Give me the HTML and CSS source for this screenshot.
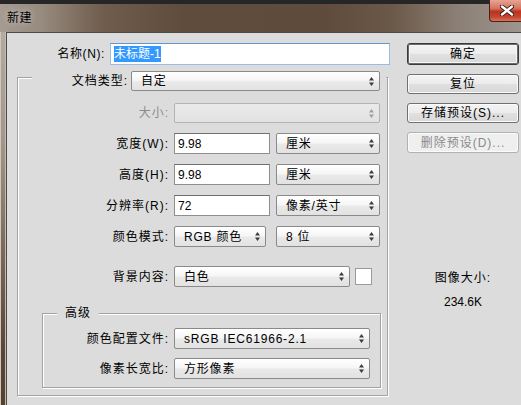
FILE: index.html
```html
<!DOCTYPE html>
<html lang="zh">
<head>
<meta charset="utf-8">
<title>新建</title>
<link rel="stylesheet" href="styles.css">
</head>
<body>
<div class="window">
  <div class="titlebar">
    <span class="title">新建</span>
    <div class="close">
      <svg width="14" height="11" viewBox="0 0 14 11"><path d="M2 1.5 L12 9.5 M12 1.5 L2 9.5" stroke="#3a1a14" stroke-width="4.2" stroke-linecap="round"/><path d="M2 1.5 L12 9.5 M12 1.5 L2 9.5" stroke="#fff" stroke-width="2.4" stroke-linecap="round"/></svg>
    </div>
  </div>
  <div class="frame">
    <div class="frame-left"></div>
    <div class="client">
      <div class="main">
        <div class="name-row">
          <span class="name-lbl">名称(<span class="ul">N</span>):</span>
          <div class="input name-input"><span class="sel">未标题-1</span></div>
        </div>
        <div class="group">
          <div class="row doc-row">
            <span class="doc-lbl">文档类型:</span>
            <div class="select doc-select"><span class="val">自定</span><svg class="arr" width="5" height="9" viewBox="0 0 5 9"><path d="M2.5 0 L5 3.5 L0 3.5Z M0 5.5 L5 5.5 L2.5 9Z"/></svg></div>
          </div>
          <div class="row r-size">
            <span class="lbl disabled">大小:</span>
            <div class="select wide disabled-sel"><span class="val"></span><svg class="arr" width="5" height="9" viewBox="0 0 5 9"><path d="M2.5 0 L5 3.5 L0 3.5Z M0 5.5 L5 5.5 L2.5 9Z"/></svg></div>
          </div>
          <div class="row r-w">
            <span class="lbl">宽度(W):</span>
            <div class="input num">9.98</div>
            <div class="select unit"><span class="val">厘米</span><svg class="arr" width="5" height="9" viewBox="0 0 5 9"><path d="M2.5 0 L5 3.5 L0 3.5Z M0 5.5 L5 5.5 L2.5 9Z"/></svg></div>
          </div>
          <div class="row r-h">
            <span class="lbl">高度(H):</span>
            <div class="input num">9.98</div>
            <div class="select unit"><span class="val">厘米</span><svg class="arr" width="5" height="9" viewBox="0 0 5 9"><path d="M2.5 0 L5 3.5 L0 3.5Z M0 5.5 L5 5.5 L2.5 9Z"/></svg></div>
          </div>
          <div class="row r-r">
            <span class="lbl">分辨率(R):</span>
            <div class="input num">72</div>
            <div class="select unit"><span class="val">像素/英寸</span><svg class="arr" width="5" height="9" viewBox="0 0 5 9"><path d="M2.5 0 L5 3.5 L0 3.5Z M0 5.5 L5 5.5 L2.5 9Z"/></svg></div>
          </div>
          <div class="row r-mode">
            <span class="lbl">颜色模式:</span>
            <div class="select mode"><span class="val">RGB 颜色</span><svg class="arr" width="5" height="9" viewBox="0 0 5 9"><path d="M2.5 0 L5 3.5 L0 3.5Z M0 5.5 L5 5.5 L2.5 9Z"/></svg></div>
            <div class="select unit bits"><span class="val">8 位</span><svg class="arr" width="5" height="9" viewBox="0 0 5 9"><path d="M2.5 0 L5 3.5 L0 3.5Z M0 5.5 L5 5.5 L2.5 9Z"/></svg></div>
          </div>
          <div class="row r-bg">
            <span class="lbl">背景内容:</span>
            <div class="select bg"><span class="val">白色</span><svg class="arr" width="5" height="9" viewBox="0 0 5 9"><path d="M2.5 0 L5 3.5 L0 3.5Z M0 5.5 L5 5.5 L2.5 9Z"/></svg></div>
            <div class="swatch"></div>
          </div>
          <div class="adv">
            <div class="legend">高级</div>
            <div class="row r-prof">
              <span class="lbl adv-lbl">颜色配置文件:</span>
              <div class="select adv-sel"><span class="val">sRGB IEC61966-2.1</span><svg class="arr" width="5" height="9" viewBox="0 0 5 9"><path d="M2.5 0 L5 3.5 L0 3.5Z M0 5.5 L5 5.5 L2.5 9Z"/></svg></div>
            </div>
            <div class="row r-pix">
              <span class="lbl adv-lbl">像素长宽比:</span>
              <div class="select adv-sel"><span class="val">方形像素</span><svg class="arr" width="5" height="9" viewBox="0 0 5 9"><path d="M2.5 0 L5 3.5 L0 3.5Z M0 5.5 L5 5.5 L2.5 9Z"/></svg></div>
            </div>
          </div>
        </div>
      </div>
      <div class="side">
        <div class="btn default">确定</div>
        <div class="btn">复位</div>
        <div class="btn">存储预设(S)...</div>
        <div class="btn btn-disabled">删除预设(D)...</div>
        <div class="info">
          <div class="info-lbl">图像大小:</div>
          <div class="info-val">234.6K</div>
        </div>
      </div>
    </div>
  </div>
</div>
</body>
</html>
```

FILE: styles.css
```css
* { box-sizing: border-box; }
html, body { margin: 0; padding: 0; }
body {
  width: 521px;
  height: 405px;
  overflow: hidden;
  background: #232323;
  font-family: "Liberation Sans", "Noto Sans CJK SC", sans-serif;
  font-size: 12px;
  line-height: 14px;
  color: #000;
}
.window {
  width: 521px;
  height: 405px;
  display: flex;
  flex-direction: column;
}
.titlebar {
  height: 32px;
  flex: none;
  display: flex;
  justify-content: space-between;
  align-items: flex-start;
  background:
    linear-gradient(#262626, #262626) top left / 100% 4px no-repeat,
    linear-gradient(to right, #a59b92 0%, #978a7e 8%, #6e5c4c 20%, #5f4c3c 35%, #5e4b3b 62%, #6a5848 75%, #8c8076 88%, #9e958d 100%);
}
.title {
  margin: 11px 0 0 7px;
  letter-spacing: 0.5px;
  text-shadow: 0 0 6px rgba(255,255,255,0.6);
}
.close {
  width: 32px;
  height: 22px;
  border: 1px solid #4a2119;
  border-top: none;
  border-right: none;
  border-radius: 0 0 0 4px;
  background: linear-gradient(#e7a395 0%, #d47560 40%, #b9341e 55%, #c4462f 80%, #d8735d 100%);
  display: flex;
  align-items: center;
  justify-content: center;
  padding-left: 2px;
}
.frame {
  flex: 1;
  display: flex;
}
.frame-left {
  width: 6px;
  flex: none;
  background: linear-gradient(#b3aaa1 0%, #a39689 30%, #7a6756 60%, #5a4634 85%, #56412f 100%);
  box-shadow: inset 1px 0 0 #cfc6bd, inset -1px 0 0 #c4bbb2;
}
.client {
  flex: 1;
  background: #dcdcdc;
  border-top: 1px solid #4b4b4b;
  border-left: 1px solid #4b4b4b;
  display: flex;
  padding-top: 10px;
}
.main {
  width: 393px;
  flex: none;
}
.name-row {
  display: flex;
  align-items: center;
  height: 22px;
}
.name-lbl {
  width: 98px;
  text-align: right;
  letter-spacing: 0.6px;
}
.input {
  background: #fff;
  border: 1px solid #8e8e8e;
  border-top-color: #6f6f6f;
  display: flex;
  align-items: center;
  padding-left: 3px;
  height: 21px;
}
.name-input {
  margin-left: 5px;
  width: 280px;
  height: 22px;
  border-color: #9cbbe0;
  border-top-color: #5f95d2;
  padding-left: 3px;
}
.sel {
  background: #3399ff;
  color: #fff;
  padding: 1px 0;
}
.group {
  margin: 12px 0 0 10px;
  width: 371px;
  border: 1px solid #a3a3a3;
  box-shadow: inset 1px 1px 0 #fff, 1px 1px 0 #fff;
  padding-bottom: 7px;
}
.row {
  display: flex;
  align-items: center;
  height: 21px;
}
.doc-row {
  margin: -7px 0 0 14px;
  width: 354px;
  height: 20px;
  background: #dcdcdc;
}
.doc-lbl {
  width: 96px;
  text-align: right;
  letter-spacing: 1px;
}
.lbl {
  width: 151px;
  text-align: right;
  letter-spacing: 1px;
  flex: none;
}
.lbl.disabled { color: #8c8c8c; }
.select {
  height: 21px;
  border: 1px solid #8a8a8a;
  border-radius: 2px;
  background: linear-gradient(#ffffff 0%, #f6f6f6 45%, #e9e9e9 55%, #e2e2e2 100%);
  display: flex;
  align-items: center;
  justify-content: space-between;
  padding: 0 5px 0 9px;
  flex: none;
  letter-spacing: 0.8px;
}
.select .arr { fill: #3c3c3c; }
.doc-select {
  margin-left: 3px;
  width: 249px;
  height: 20px;
}
.r-size { margin-top: 12px; height: 20px; }
.wide { margin-left: 5px; width: 206px; height: 20px; }
.disabled-sel {
  border-color: #b3b3b3;
  background: linear-gradient(#eaeaea, #e2e2e2);
}
.disabled-sel .arr { fill: #a0a0a0; }
.r-w { margin-top: 10px; }
.r-h { margin-top: 10px; }
.r-r { margin-top: 10px; }
.r-mode { margin-top: 10px; }
.r-bg { margin-top: 19px; }
.num { margin-left: 5px; width: 96px; }
.unit { margin-left: 6px; width: 104px; }
.mode { margin-left: 5px; width: 92px; }
.bits { margin-left: 10px; }
.bg { margin-left: 5px; width: 176px; }
.swatch {
  margin-left: 5px;
  width: 17px;
  height: 17px;
  background: #fff;
  border: 1px solid #9a9a9a;
}
.adv {
  margin: 26px 0 0 24px;
  width: 339px;
  border: 1px solid #a3a3a3;
  box-shadow: inset 1px 1px 0 #fff, 1px 1px 0 #fff;
  padding-bottom: 8px;
}
.legend {
  margin: -8px 0 0 14px;
  padding: 0 8px;
  width: fit-content;
  height: 14px;
  background: #dcdcdc;
  letter-spacing: 1px;
}
.adv-lbl { width: 126px; }
.r-prof { margin-top: 8px; }
.r-pix { margin-top: 9px; }
.adv-sel { margin-left: 5px; width: 196px; }
.side {
  width: 112px;
  margin-left: 7px;
  flex: none;
  display: flex;
  flex-direction: column;
}
.btn {
  height: 20px;
  margin-top: 9px;
  border: 1px solid #707070;
  border-radius: 3px;
  background: linear-gradient(#f4f4f4 0%, #ececec 48%, #e0e0e0 52%, #d8d8d8 100%);
  box-shadow: inset 0 0 0 1px #fbfbfb;
  display: flex;
  align-items: center;
  justify-content: center;
  letter-spacing: 1px;
}
.btn.default {
  margin-top: 0;
  height: 22px;
  border: 1px solid #3a3a3a;
  box-shadow: inset 0 0 0 1px #6a6a6a, inset 0 0 0 2px #f6f6f6;
}
.btn-disabled {
  height: 21px;
  color: #8a8a8a;
  border-color: #adb2b5;
  background: #efefef;
}
.info {
  margin-top: 118px;
  text-align: center;
}
.info-lbl { letter-spacing: 1px; }
.info-val { margin-top: 10px; }
```
